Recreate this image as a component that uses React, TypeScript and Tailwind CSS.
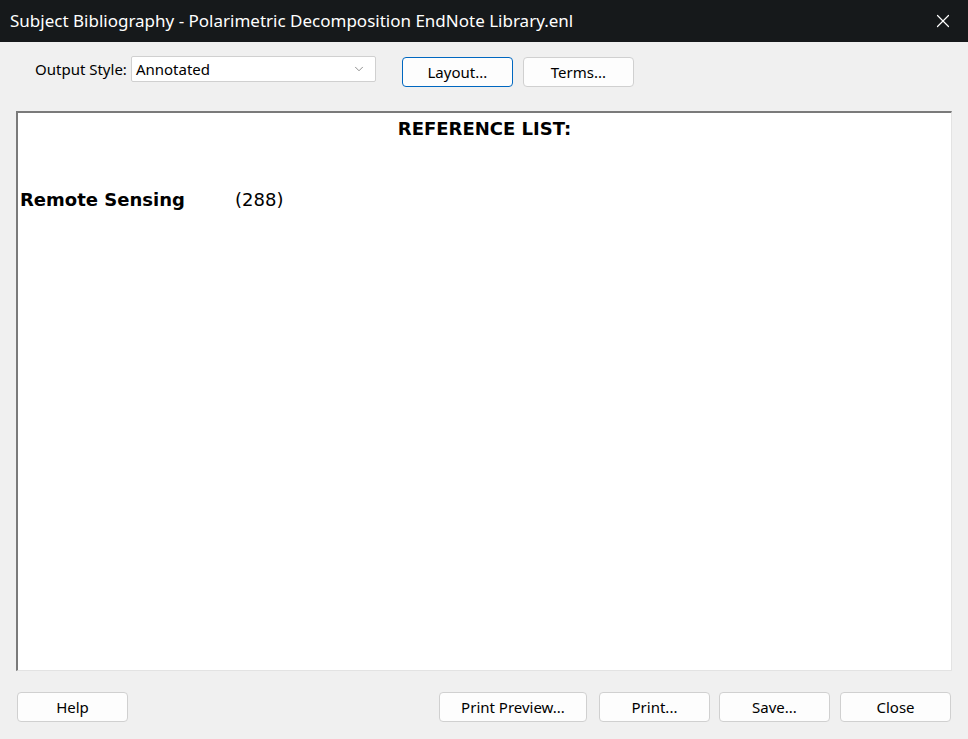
import { X, ChevronDown } from 'lucide-react';

const ui = { fontFamily: '"Noto Sans", "Open Sans", sans-serif' };
const doc = { fontFamily: '"DejaVu Sans", Verdana, sans-serif' };

function Btn({ label, w, focus, cls = '' }: { label: string; w: string; focus?: boolean; cls?: string }) {
  return (
    <button
      className={`${w} ${cls} h-[30px] rounded-[4px] bg-[#fdfdfd] text-[15px] text-black ${
        focus ? 'border border-[#0067c0]' : 'border border-[#d0d0d0]'
      }`}
      style={ui}
    >
      {label}
    </button>
  );
}

export default function App() {
  return (
    <div className="w-[968px] h-[739px] bg-[#f0f0f0] flex flex-col overflow-hidden" style={ui}>
      {/* Title bar */}
      <div className="h-[42px] bg-[#16191b] flex items-center justify-between pl-[10px] pr-[14px] shrink-0">
        <span className="text-white text-[17px]">
          Subject Bibliography - Polarimetric Decomposition EndNote Library.enl
        </span>
        <X className="text-white w-[22px] h-[22px]" strokeWidth={1.3} />
      </div>

      {/* Toolbar */}
      <div className="flex items-start h-[69px] shrink-0">
        <div className="flex items-center mt-[14px]">
          <span className="ml-[35px] text-[15px] text-black">Output Style:</span>
          <div className="ml-[4px] w-[245px] h-[26px] bg-white border border-[#d0d0d0] rounded-[2px] flex items-center justify-between pl-[4px] pr-[9px]">
            <span className="text-[15px] text-black">Annotated</span>
            <ChevronDown className="w-[14px] h-[14px] text-[#606060]" strokeWidth={1.2} />
          </div>
        </div>
        <div className="ml-[26px] flex gap-[10px] mt-[15px]">
          <Btn label="Layout..." w="w-[111px]" focus />
          <Btn label="Terms..." w="w-[111px]" />
        </div>
      </div>

      {/* Preview pane */}
      <div className="mx-[16px] h-[560px] bg-white border-t-2 border-l-2 border-t-[#7a7a7a] border-l-[#7a7a7a] border-r border-b border-r-[#e3e3e3] border-b-[#e3e3e3] shrink-0" style={doc}>
        <div className="text-center font-bold text-[18px] text-black pt-[2px]">REFERENCE LIST:</div>
        <div className="flex items-baseline mt-[44px] pl-[2px] text-[18px] text-black">
          <span className="font-bold w-[215px]">Remote Sensing</span>
          <span>(288)</span>
        </div>
      </div>

      {/* Bottom buttons */}
      <div className="flex items-center justify-between px-[17px] mt-[21px]">
        <Btn label="Help" w="w-[111px]" />
        <div className="flex">
          <Btn label="Print Preview..." w="w-[148px]" />
          <Btn label="Print..." w="w-[111px]" cls="ml-[12px]" />
          <Btn label="Save..." w="w-[111px]" cls="ml-[9px]" />
          <Btn label="Close" w="w-[111px]" cls="ml-[10px]" />
        </div>
      </div>
    </div>
  );
}
